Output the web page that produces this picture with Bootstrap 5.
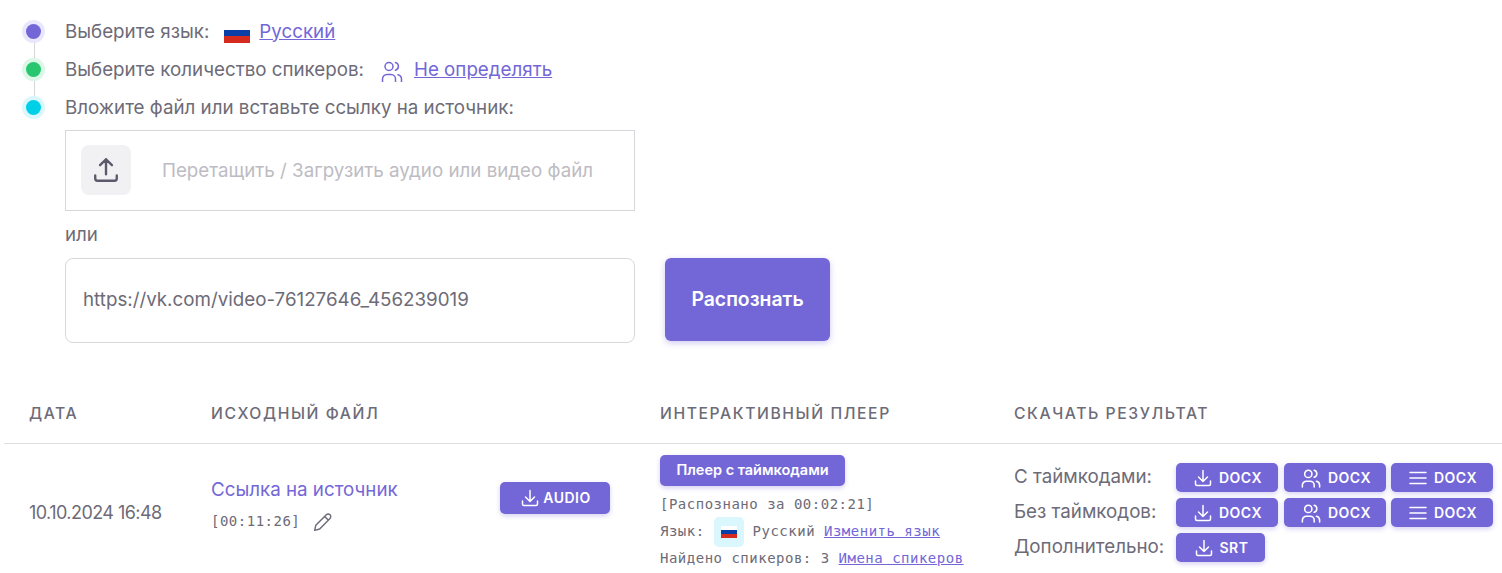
<!DOCTYPE html>
<html lang="ru">
<head>
<meta charset="utf-8">
<title>Распознавание</title>
<link href="https://cdn.jsdelivr.net/npm/bootstrap@5.3.0/dist/css/bootstrap.min.css" rel="stylesheet">
<style>
body{font-family:"Inter","Liberation Sans",sans-serif;font-size:18.75px;color:#6d6b77;background:#fff;overflow:hidden;line-height:1.4}
a{color:#7367d8}
.pane{padding:13px 0 0 65px;height:363px}
.steps{position:relative}
.stepline{height:38px;display:flex;align-items:center;gap:15px;position:relative}
.dot{position:absolute;left:-43px;top:7px;width:23px;height:23px;border-radius:50%}
.dot::after{content:"";position:absolute;inset:4px;border-radius:50%;background:inherit}
.dot-a{background:#e9e7fb}.dot-a::after{background:#7367d8}
.dot-b{background:#dcf6e7}.dot-b::after{background:#28c76f}
.dot-c{background:#d9f7fc}.dot-c::after{background:#00cfe8}
.rail{position:absolute;left:-31px;top:18px;height:76px;width:1px;background:#d6d6da}
.flagbar{display:block;width:26px;height:20px;margin-top:1px;background:linear-gradient(#fff 0 33.300%,#0b3fa8 33.300% 66.600%,#d52b1e 66.600%)}
.lang-link{margin-left:-6px}
.spk-icon{margin-left:2px;margin-top:1px;overflow:hidden}
.spk-link{margin-left:-4px}
.dropbox{width:570px;height:81px;border:1px solid #d8d8dc;padding:0 15px;display:flex;align-items:center;gap:31px;margin-top:3px;color:#bdbcc3}
.upicon{width:50px;height:50px;border-radius:8px;background:#f1f0f3;display:flex;align-items:center;justify-content:center;margin-bottom:1px}
.droptext{margin-top:1px}
.ortext{margin:11px 0 11px;height:25px;line-height:25px}
.urlrow{display:flex;gap:30px;align-items:flex-start}
.urlfield{width:570px;height:85px;border-radius:8px;border:1px solid #d8d8dc;padding:0 17px 2px;color:#6d6b77;background:#fff}
.urlfield:focus{outline:none}
.bigbtn{width:165px;height:83px;border-radius:6px;background:#7367d8;color:#fff;border:0;font-weight:600;font-size:19.400px;padding-top:7px;box-shadow:0 2px 6px rgba(115,103,216,.35)}
.bigbtn:hover{background:#7367d8;color:#fff}
.grid-wrap{margin-left:4px}
.grid-head{display:flex;height:81px;align-items:center;padding-top:22px;border-bottom:1px solid #dedee1;font-size:15.700px;font-weight:500;letter-spacing:1.590px;color:#6d6b77}
.c-date{width:182px;padding-left:25px;flex:none}
.c-file{width:449px;flex:none;padding-left:25px}
.c-play{width:354px;flex:none;padding-left:25px}
.c-down{padding-left:25px;flex:none}
.grid-body{display:flex}
.grid-body .c-date{padding-top:56px;font-size:18px;letter-spacing:-.55px}
.fileinner{display:flex;width:100%}
.srclink{text-decoration:none;display:block;line-height:26px}
.mono{font-family:"DejaVu Sans Mono","Liberation Mono",monospace;font-size:14px;letter-spacing:.5px;color:#6d6b77}
.duration{margin-top:9px;gap:13px}
.actbtn{background:#7367d8;color:#fff;border:0;border-radius:5px;font-weight:600;font-size:14px;letter-spacing:.5px;display:inline-flex;align-items:center;justify-content:center;gap:7px;height:29px;padding:0 0 0 2px;box-shadow:0 2px 5px rgba(115,103,216,.3);line-height:1}
.actbtn:hover{background:#7367d8;color:#fff}
.w-audio{width:110px;height:32px;gap:4px}
.w-player{width:185px;height:31px;letter-spacing:0;font-size:14.500px;padding:0}
.w-doc{width:102px}
.w-doc:nth-child(3){margin-left:-1px}
.w-srt{width:89px}
.playlines{line-height:27px;padding-top:1px}
.tinyflag{display:inline-flex;width:30px;height:30px;border-radius:5px;background:#d9f7fc;align-items:center;justify-content:center;margin:-3px 9px -3px 0;vertical-align:middle}
.tinyflag i{display:block;width:16px;height:12px;background:linear-gradient(#fff 0 33.300%,#0b3fa8 33.300% 66.600%,#d52b1e 66.600%)}
.dlrow{display:flex;align-items:center;height:35px}
.lab{width:162px;flex:none}
.dlbtns{display:flex;gap:6px}
.ic{flex:none}
</style>
</head>
<body>
<div class="pane">
  <div class="steps">
    <div class="rail"></div>
    <div class="stepline"><span class="dot dot-a"></span><span>Выберите язык:</span><span class="flagbar"></span><a href="#" class="lang-link">Русский</a></div>
    <div class="stepline"><span class="dot dot-b"></span><span>Выберите количество спикеров:</span>
      <svg class="ic spk-icon" width="22" height="22" viewBox="0 0 22 22" fill="none" stroke="#7367d8" stroke-width="1.500" stroke-linecap="round" stroke-linejoin="round"><circle cx="8" cy="6.500" r="4"/><path d="M1.500 23v-4a4.500 4.500 0 0 1 4.500-4.500h4a4.500 4.500 0 0 1 4.500 4.500v4M14.500 2.500a4 4 0 0 1 0 7.700M20.500 23v-4a4.500 4.500 0 0 0-3.500-4.300"/></svg>
      <a href="#" class="spk-link">Не определять</a></div>
    <div class="stepline"><span class="dot dot-c"></span><span>Вложите файл или вставьте ссылку на источник:</span></div>
  </div>
  <div class="dropbox">
    <span class="upicon"><svg width="28" height="28" viewBox="0 0 26 26" fill="none" stroke="#5d596c" stroke-width="2.200" stroke-linecap="round" stroke-linejoin="round"><path d="M3 18v3a2 2 0 0 0 2 2h16a2 2 0 0 0 2-2v-3M13 17V3M7.500 8.500 13 3l5.500 5.500"/></svg></span>
    <span class="droptext">Перетащить / Загрузить аудио или видео файл</span>
  </div>
  <div class="ortext">или</div>
  <div class="urlrow">
    <input class="urlfield" type="text" value="https://vk.com/video-76127646_456239019">
    <button class="btn bigbtn" type="button">Распознать</button>
  </div>
</div>
<div class="grid-wrap">
  <div class="grid-head">
    <div class="c-date">ДАТА</div><div class="c-file">ИСХОДНЫЙ ФАЙЛ</div><div class="c-play">ИНТЕРАКТИВНЫЙ ПЛЕЕР</div><div class="c-down">СКАЧАТЬ РЕЗУЛЬТАТ</div>
  </div>
  <div class="grid-body">
    <div class="c-date">10.10.2024 16:48</div>
    <div class="c-file">
      <div class="fileinner">
        <div style="width:289px;padding-top:33px">
          <a class="srclink" href="#">Ссылка на источник</a>
          <div class="mono duration d-flex align-items-center">[00:11:26]
            <svg class="ic" width="20" height="20" viewBox="0 0 18 18" fill="none" stroke="#6d6b77" stroke-width="1.300" stroke-linejoin="round"><path d="M1.500 16.500l1-4.500L12 2.500a2.200 2.200 0 0 1 3.300 3.300L6 15.300zM10.500 4l3.500 3.500"/></svg>
          </div>
        </div>
        <div style="padding-top:38px">
          <button class="btn actbtn w-audio" type="button"><svg class="ic" width="18" height="18" viewBox="0 0 18 18" fill="none" stroke="#fff" stroke-width="1.500" stroke-linecap="round" stroke-linejoin="round"><path d="M1.500 12v3a1.500 1.500 0 0 0 1.500 1.500h12a1.500 1.500 0 0 0 1.500-1.500v-3M9 1.500V12M4.500 8 9 12.500 13.500 8"/></svg>AUDIO</button>
        </div>
      </div>
    </div>
    <div class="c-play" style="padding-top:11px">
      <button class="btn actbtn w-player mb-1" type="button">Плеер с таймкодами</button>
      <div class="mono playlines">
        <div>[Распознано за 00:02:21]</div>
        <div>Язык: <span class="tinyflag"><i></i></span>Русский <a href="#">Изменить язык</a></div>
        <div>Найдено спикеров: 3 <a href="#">Имена спикеров</a></div>
      </div>
    </div>
    <div class="c-down" style="padding-top:16px">
      <div class="dlrow"><span class="lab">С таймкодами:</span><div class="dlbtns">
        <button class="btn actbtn w-doc" type="button"><svg class="ic" width="18" height="18" viewBox="0 0 18 18" fill="none" stroke="#fff" stroke-width="1.500" stroke-linecap="round" stroke-linejoin="round"><path d="M1.500 12v3a1.500 1.500 0 0 0 1.500 1.500h12a1.500 1.500 0 0 0 1.500-1.500v-3M9 1.500V12M4.500 8 9 12.500 13.500 8"/></svg>DOCX</button>
        <button class="btn actbtn w-doc" type="button"><svg class="ic" width="20" height="20" viewBox="0 0 22 22" fill="none" stroke="#fff" stroke-width="1.700" stroke-linecap="round" stroke-linejoin="round"><circle cx="8" cy="6.500" r="4"/><path d="M1.500 21v-2a4.500 4.500 0 0 1 4.500-4.500h4a4.500 4.500 0 0 1 4.500 4.500v2M14.500 2.500a4 4 0 0 1 0 7.700M20.500 21v-2a4.500 4.500 0 0 0-3.500-4.300"/></svg>DOCX</button>
        <button class="btn actbtn w-doc" type="button"><svg class="ic" width="18" height="18" viewBox="0 0 18 18" fill="none" stroke="#fff" stroke-width="1.500" stroke-linecap="round"><path d="M1 3.500h16M1 9h16M1 14.500h16"/></svg>DOCX</button>
      </div></div>
      <div class="dlrow"><span class="lab">Без таймкодов:</span><div class="dlbtns">
        <button class="btn actbtn w-doc" type="button"><svg class="ic" width="18" height="18" viewBox="0 0 18 18" fill="none" stroke="#fff" stroke-width="1.500" stroke-linecap="round" stroke-linejoin="round"><path d="M1.500 12v3a1.500 1.500 0 0 0 1.500 1.500h12a1.500 1.500 0 0 0 1.500-1.500v-3M9 1.500V12M4.500 8 9 12.500 13.500 8"/></svg>DOCX</button>
        <button class="btn actbtn w-doc" type="button"><svg class="ic" width="20" height="20" viewBox="0 0 22 22" fill="none" stroke="#fff" stroke-width="1.700" stroke-linecap="round" stroke-linejoin="round"><circle cx="8" cy="6.500" r="4"/><path d="M1.500 21v-2a4.500 4.500 0 0 1 4.500-4.500h4a4.500 4.500 0 0 1 4.500 4.500v2M14.500 2.500a4 4 0 0 1 0 7.700M20.500 21v-2a4.500 4.500 0 0 0-3.500-4.300"/></svg>DOCX</button>
        <button class="btn actbtn w-doc" type="button"><svg class="ic" width="18" height="18" viewBox="0 0 18 18" fill="none" stroke="#fff" stroke-width="1.500" stroke-linecap="round"><path d="M1 3.500h16M1 9h16M1 14.500h16"/></svg>DOCX</button>
      </div></div>
      <div class="dlrow"><span class="lab">Дополнительно:</span><div class="dlbtns">
        <button class="btn actbtn w-srt" type="button"><svg class="ic" width="18" height="18" viewBox="0 0 18 18" fill="none" stroke="#fff" stroke-width="1.500" stroke-linecap="round" stroke-linejoin="round"><path d="M1.500 12v3a1.500 1.500 0 0 0 1.500 1.500h12a1.500 1.500 0 0 0 1.500-1.500v-3M9 1.500V12M4.500 8 9 12.500 13.500 8"/></svg>SRT</button>
      </div></div>
    </div>
  </div>
</div>
</body>
</html>
